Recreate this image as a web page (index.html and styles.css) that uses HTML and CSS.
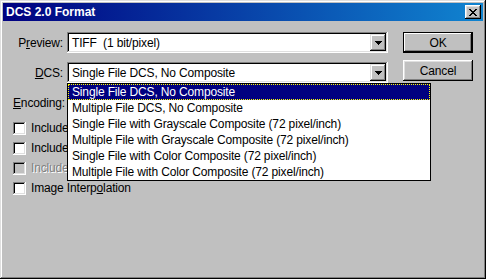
FILE: index.html
```html
<!DOCTYPE html>
<html>

<head>
    <meta charset="UTF-8">
    <title>DCS 2.0 Format</title>
    <link rel="stylesheet" href="styles.css">
</head>

<body>
    <div class="window">
        <div class="titlebar">
            <span class="title">DCS 2.0 Format</span>
            <button class="close" type="button">
                <svg width="8" height="7" viewBox="0 0 8 7">
                    <path d="M0 0h2v1H0z M6 0h2v1H6z M1 1h2v1H1z M5 1h2v1H5z M2 2h4v1H2z M3 3h2v1H3z M2 4h4v1H2z M1 5h2v1H1z M5 5h2v1H5z M0 6h2v1H0z M6 6h2v1H6z" fill="#000" />
                </svg>
            </button>
        </div>

        <div class="content">
            <div class="fields">
                <div class="row">
                    <label class="lbl">P<u>r</u>eview:</label>
                    <div class="combo">
                        <span class="value">TIFF&nbsp; (1 bit/pixel)</span>
                        <span class="arrow"><svg width="7" height="4" viewBox="0 0 7 4"><path d="M0 0h7v1H0z M1 1h5v1H1z M2 2h3v1H2z M3 3h1v1H3z" fill="#000" /></svg></span>
                    </div>
                </div>
                <div class="row">
                    <label class="lbl"><u>D</u>CS:</label>
                    <div class="combo">
                        <span class="value">Single File DCS, No Composite</span>
                        <span class="arrow"><svg width="7" height="4" viewBox="0 0 7 4"><path d="M0 0h7v1H0z M1 1h5v1H1z M2 2h3v1H2z M3 3h1v1H3z" fill="#000" /></svg></span>
                        <ul class="list">
                            <li class="item selected">Single File DCS, No Composite</li>
                            <li class="item">Multiple File DCS, No Composite</li>
                            <li class="item">Single File with Grayscale Composite (72 pixel/inch)</li>
                            <li class="item">Multiple File with Grayscale Composite (72 pixel/inch)</li>
                            <li class="item">Single File with Color Composite (72 pixel/inch)</li>
                            <li class="item">Multiple File with Color Composite (72 pixel/inch)</li>
                        </ul>
                    </div>
                </div>
                <div class="row">
                    <label class="lbl"><u>E</u>ncoding:</label>
                    <div class="combo">
                        <span class="value"></span>
                        <span class="arrow"><svg width="7" height="4" viewBox="0 0 7 4"><path d="M0 0h7v1H0z M1 1h5v1H1z M2 2h3v1H2z M3 3h1v1H3z" fill="#000" /></svg></span>
                    </div>
                </div>

                <div class="checks">
                    <div class="check"><span class="box"></span><span>Include Halftone Screen</span></div>
                    <div class="check"><span class="box"></span><span>Include Transfer Function</span></div>
                    <div class="check disabled"><span class="box"></span><span>Include Vector Data</span></div>
                    <div class="check"><span class="box"></span><span>Image Interp<u>o</u>lation</span></div>
                </div>
            </div>

            <div class="buttons">
                <button class="btn default" type="button">OK</button>
                <button class="btn" type="button">Cancel</button>
            </div>
        </div>
    </div>
</body>

</html>
```

FILE: styles.css
```css
body {
    margin: 0;
    background-color: #c0c0c0;
    font-family: "Liberation Sans", Arial, sans-serif;
    font-size: 12px;
    letter-spacing: -0.15px;
    color: #000;
    overflow: hidden;
}

.window {
    width: 486px;
    height: 279px;
    box-sizing: border-box;
    padding: 3px;
    background-color: #c0c0c0;
    box-shadow: inset -1px -1px #000, inset 1px 1px #dfdfdf, inset -2px -2px #808080, inset 2px 2px #fff;
}

.titlebar {
    height: 18px;
    display: flex;
    align-items: center;
    justify-content: space-between;
    padding: 0 2px 0 3px;
    background: linear-gradient(90deg, #000080, #1084d0);
    color: #fff;
}

.title {
    font-weight: bold;
    letter-spacing: 0;
}

.close {
    width: 16px;
    height: 14px;
    padding: 0;
    border: 0;
    background-color: #c0c0c0;
    display: flex;
    align-items: center;
    justify-content: center;
    box-shadow: inset -1px -1px #000, inset 1px 1px #fff, inset -2px -2px #808080, inset 2px 2px #dfdfdf;
}

.content {
    display: flex;
    gap: 15px;
    padding: 11px 10px 0 10px;
}

.fields {
    width: 375px;
}

.row {
    display: flex;
    align-items: center;
    gap: 4px;
    height: 21px;
    margin-bottom: 9px;
}

.lbl {
    width: 50px;
    text-align: right;
    white-space: nowrap;
}

.combo {
    position: relative;
    width: 321px;
    height: 21px;
    box-sizing: border-box;
    padding: 2px;
    display: flex;
    align-items: center;
    background-color: #fff;
    box-shadow: inset -1px -1px #fff, inset 1px 1px #808080, inset -2px -2px #dfdfdf, inset 2px 2px #000;
}

.value {
    flex: 1;
    padding-left: 3px;
    white-space: nowrap;
}

.arrow {
    width: 16px;
    height: 17px;
    display: flex;
    align-items: center;
    justify-content: center;
    background-color: #c0c0c0;
    box-shadow: inset -1px -1px #000, inset 1px 1px #dfdfdf, inset -2px -2px #808080, inset 2px 2px #fff;
}

.list {
    position: absolute;
    left: 0;
    top: 100%;
    z-index: 2;
    width: 364px;
    box-sizing: border-box;
    margin: 0;
    padding: 0;
    list-style-type: none;
    border: 1px solid #000;
    background-color: #fff;
}

.item {
    height: 16px;
    line-height: 16px;
    padding-left: 4px;
    white-space: nowrap;
}

.item.selected {
    background-color: #000080;
    color: #fff;
    outline: 1px dotted #ffff00;
    outline-offset: -1px;
}

.checks {
    display: flex;
    flex-direction: column;
    gap: 7px;
}

.check {
    display: flex;
    align-items: center;
    gap: 5px;
    height: 13px;
    line-height: 13px;
    white-space: nowrap;
}

.box {
    width: 13px;
    height: 13px;
    box-sizing: border-box;
    background-color: #fff;
    box-shadow: inset -1px -1px #fff, inset 1px 1px #808080, inset -2px -2px #dfdfdf, inset 2px 2px #000;
}

.check.disabled {
    color: #808080;
    text-shadow: 1px 1px #fff;
}

.check.disabled .box {
    background-color: #c0c0c0;
}

.buttons {
    display: flex;
    flex-direction: column;
    gap: 7px;
}

.btn {
    width: 70px;
    height: 21px;
    padding: 0;
    border: 0;
    font: inherit;
    letter-spacing: inherit;
    color: #000;
    background-color: #c0c0c0;
    box-shadow: inset -1px -1px #000, inset 1px 1px #fff, inset -2px -2px #808080, inset 2px 2px #dfdfdf;
}

.btn.default {
    box-shadow: inset 0 0 0 1px #000, inset -2px -2px #000, inset 2px 2px #fff, inset -3px -3px #808080;
}
```
